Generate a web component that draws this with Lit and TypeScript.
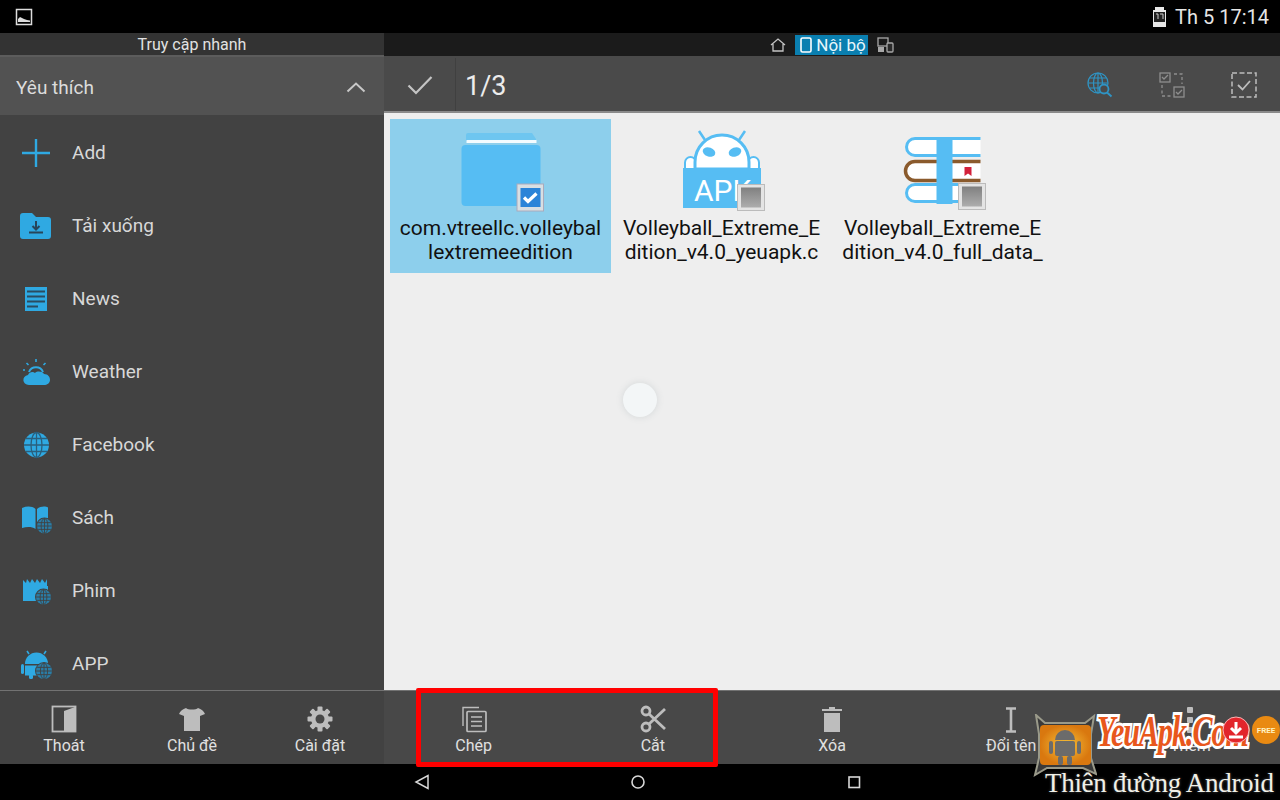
import { LitElement, html, css, svg } from "lit";
import { customElement } from "lit/decorators.js";

const BLUE = "#2fa9e2";
const GREY = "#bdbdbd";

const smallGlobe = (cx: number, cy: number, r: number) => svg`
  <circle cx=${cx} cy=${cy} r=${r + 1} fill="#424242" />
  <circle cx=${cx} cy=${cy} r=${r} fill="#2a7da6" />
  <g fill="none" stroke="#424242" stroke-width="0.9">
    <ellipse cx=${cx} cy=${cy} rx=${r * 0.45} ry=${r} />
    <path d="M${cx - r} ${cy}H${cx + r}M${cx - r * 0.85} ${cy - r * 0.45}H${cx + r * 0.85}M${cx - r * 0.85} ${cy + r * 0.45}H${cx + r * 0.85}M${cx} ${cy - r}V${cy + r}" />
  </g>`;

const menuIcons: Record<string, unknown> = {
  add: svg`<path d="M6 20H34M20 6V34" stroke=${BLUE} stroke-width="2.4" />`,
  download: svg`
    <path d="M4 10a3 3 0 0 1 3-3h9l4 4h12a3 3 0 0 1 3 3v16a3 3 0 0 1-3 3H7a3 3 0 0 1-3-3Z" fill=${BLUE} />
    <path d="M20 15v8M16.5 20l3.5 3.5 3.5-3.5M13 26.5H27" fill="none" stroke="#27465a" stroke-width="2" />`,
  news: svg`
    <rect x="9" y="8" width="22" height="24" fill=${BLUE} />
    <path d="M11 12.5H29M11 17.5H29M11 22.5H29M11 27.5H22" stroke="#2b4c60" stroke-width="2" />`,
  weather: svg`
    <path d="M13 20a7.5 7.5 0 0 1 14 0" fill="none" stroke=${BLUE} stroke-width="2" />
    <path d="M20 7v3M10.5 11l2 2M29.500 11l-2 2M7 18h2" stroke=${BLUE} stroke-width="1.6" />
    <path d="M13 33c-7 0-7.500-9-1-10 1-3 5-4 7-2 2-2 7-2 9 1 4 0 6 3 6 6s-3 5-6 5Z" fill=${BLUE} />`,
  globe: svg`
    <circle cx="20.500" cy="20" r="12.500" fill=${BLUE} />
    <g fill="none" stroke="#2b5f7c" stroke-width="1.300">
      <ellipse cx="20.500" cy="20" rx="5.500" ry="12.500" />
      <path d="M8 20H33M20.500 7.500V32.500M10 13.500H31M10 26.500H31" />
    </g>`,
  book: svg`
    <path d="M6 10c5-2 10-2 13.500 1v20C16 28.500 11 28.500 6 30Z" fill=${BLUE} />
    <path d="M21 11c3.500-3 8.500-3 11-1.500V30c-3-1.500-7.500-1.500-11 1Z" fill=${BLUE} />
    ${smallGlobe(28.500, 28, 7.500)}`,
  movie: svg`
    <path d="M7 9l3 3 1-4 3 4 2-4 3 4 2-4 3 4 2-4 3 4 2-4v7H7Z" fill=${BLUE} />
    <rect x="7" y="15" width="25" height="15" fill=${BLUE} />
    ${smallGlobe(27.500, 26, 7.500)}`,
  app: svg`
    <path d="M9 20a11.500 11.500 0 0 1 23 0Z" fill=${BLUE} />
    <path d="M13 10l-2-3M28 10l2-3" stroke=${BLUE} stroke-width="1.600" />
    <rect x="9" y="21.500" width="23" height="10" fill=${BLUE} />
    <rect x="5" y="20" width="3" height="10" rx="1.500" fill=${BLUE} />
    <rect x="13" y="30" width="4" height="5" rx="1.500" fill=${BLUE} />
    ${smallGlobe(28, 27, 8)}`,
};

const toolIcons: Record<string, unknown> = {
  exit: svg`
    <rect x="3.500" y="2.500" width="23" height="25" fill="none" stroke=${GREY} stroke-width="1.800" />
    <path d="M15 7l11-4v24H15Z" fill=${GREY} />`,
  theme: svg`<path d="M9 4c2 2 10 2 12 0 3 1 6 3 7 6l-5 2v15H7V12l-5-2c1-3 4-5 7-6Z" fill=${GREY} />`,
  gear: svg`
    <g fill=${GREY}>
      <circle cx="15" cy="15" r="9" />
      ${[0, 45, 90, 135, 180, 225, 270, 315].map(
        (a) => svg`<rect x="12.500" y="2.500" width="5" height="6" rx="1" transform="rotate(${a} 15 15)" />`
      )}
    </g>
    <circle cx="15" cy="15" r="4.500" fill="#484848" />`,
  copy: svg`
    <path d="M4 22V3.500H20" fill="none" stroke=${GREY} stroke-width="1.400" />
    <g fill="none" stroke=${GREY} stroke-width="1.700">
      <rect x="8" y="7.500" width="19" height="20" rx="1" />
      <path d="M12 13H23M12 17.500H23M12 22H23" />
    </g>`,
  cut: svg`
    <g fill="none" stroke=${GREY} stroke-width="2.800">
      <circle cx="8" cy="7" r="4" />
      <circle cx="8" cy="23" r="4" />
      <path d="M11 10L27 25M11 20L27 5" />
    </g>`,
  trash: svg`
    <path d="M5 5h7V3h6v2h7v2H5Z" fill=${GREY} />
    <rect x="7" y="9" width="16" height="19" fill=${GREY} />`,
  rename: svg`<path d="M10 4.500H20M10 27.500H20M15 4.500V27.500" fill="none" stroke=${GREY} stroke-width="2.600" />`,
  more: svg`
    <g fill=${GREY}>
      <rect x="12" y="3" width="6" height="6" rx="1" />
      <rect x="12" y="13" width="6" height="6" rx="1" />
      <rect x="12" y="23" width="6" height="6" rx="1" />
    </g>`,
};

const greyCheck = (x: number, y: number) => svg`
  <rect x=${x} y=${y} width="27" height="26" fill="#e4e4e4" stroke="#bbb" />
  <rect x=${x + 3.500} y=${y + 3} width="20" height="20" fill="url(#chk)" />`;

const fileIcons = {
  folder: svg`
    <path d="M20 22V16a2 2 0 0 1 2-2H86l4 6v4Z" fill="#6ec6f0" />
    <rect x="20.500" y="21" width="70" height="3" fill="#f2fbff" />
    <path d="M15.500 30a4 4 0 0 1 4-4H90.500a4 4 0 0 1 4 4V83a4 4 0 0 1-4 4H19.500a4 4 0 0 1-4-4Z" fill="#56bdf3" />
    <rect x="71" y="65" width="26.500" height="27" fill="#d8dfe3" stroke="#aab" />
    <rect x="74.500" y="69" width="20" height="19" fill="#2b84d8" />
    <path d="M78 78.500l4 4 8.500-8" fill="none" stroke="#fff" stroke-width="3.200" />`,
  apk: svg`
    <rect x="18" y="38" width="11" height="16" rx="5.500" fill="#fff" stroke="#56bdf3" stroke-width="2" />
    <rect x="81" y="38" width="11" height="16" rx="5.500" fill="#fff" stroke="#56bdf3" stroke-width="2" />
    <path d="M38 21l-6-9M72 21l6-9" stroke="#56bdf3" stroke-width="2.500" />
    <path d="M28 50V43a27 27 0 0 1 54 0V50Z" fill="#fff" stroke="#56bdf3" stroke-width="3" />
    <ellipse cx="42" cy="33" rx="6.500" ry="4.500" fill="#56bdf3" transform="rotate(20 42 33)" />
    <ellipse cx="68" cy="33" rx="6.500" ry="4.500" fill="#56bdf3" transform="rotate(-20 68 33)" />
    <rect x="16" y="49" width="78" height="40" fill="#56bdf3" />
    <text x="27" y="82" font-family="Roboto, sans-serif" font-size="30" fill="#fff">APK</text>
    ${greyCheck(70.500, 65.500)}`,
  books: svg`
    <path d="M92.500 19.500H27a8.500 8.500 0 0 0 0 17H92.500" fill="#fff" stroke="#56bdf3" stroke-width="3" />
    <path d="M92.500 42.500H27a9 9 0 0 0 0 19H92.500" fill="#fff" stroke="#8a5a2c" stroke-width="3.500" />
    <path d="M92.500 65.500H27a8.500 8.500 0 0 0 0 17H92.500" fill="#fff" stroke="#56bdf3" stroke-width="3" />
    <rect x="48.500" y="18" width="16" height="67" fill="#56bdf3" />
    <path d="M76.500 48h7v9l-3.500-2.500-3.500 2.500Z" fill="#d3203a" />
    ${greyCheck(70.500, 64.500)}`,
};

const MENU = [
  ["add", "Add"],
  ["download", "Tải xuống"],
  ["news", "News"],
  ["weather", "Weather"],
  ["globe", "Facebook"],
  ["book", "Sách"],
  ["movie", "Phim"],
  ["app", "APP"],
];

const FILES = [
  { icon: fileIcons.folder, lines: ["com.vtreellc.volleybal", "lextremeedition"], selected: true },
  { icon: fileIcons.apk, lines: ["Volleyball_Extreme_E", "dition_v4.0_yeuapk.c"], selected: false },
  { icon: fileIcons.books, lines: ["Volleyball_Extreme_E", "dition_v4.0_full_data_"], selected: false },
];

@customElement("app-root")
export class AppRoot extends LitElement {
  tool(icon: string, label: string) {
    return html`
      <div class="tool">
        <svg width="30" height="30" viewBox="0 0 30 30">${toolIcons[icon]}</svg>
        <span>${label}</span>
      </div>
    `;
  }

  renderLogo() {
    return html`
      <svg class="logo-badge" width="64" height="64" viewBox="0 0 64 64">
        <defs>
          <radialGradient id="glow">
            <stop offset="0" stop-color="#f6c23a" />
            <stop offset="1" stop-color="#d9780f" />
          </radialGradient>
        </defs>
        <path d="M3 1l9 8H52L61 2 58 20V44L63 60 50 54H14L2 61 6 44V20Z" fill="#3a3a3a" stroke="#9a9a8a" stroke-width="2" />
        <rect x="7" y="11" width="51" height="40" rx="4" fill="url(#glow)" />
        <g fill="#6b6b6b">
          <path d="M22 26a10 10 0 0 1 20 0Z" />
          <rect x="22" y="27" width="20" height="15" rx="2" />
          <rect x="16" y="27" width="4" height="13" rx="2" />
          <rect x="44" y="27" width="4" height="13" rx="2" />
          <rect x="25" y="42" width="5" height="9" rx="2" />
          <rect x="34" y="42" width="5" height="9" rx="2" />
        </g>
      </svg>
      <span class="logo-name">YeuApk.Com</span>
      <svg class="logo-free" width="62" height="32" viewBox="0 0 62 32">
        <circle cx="15" cy="16" r="13" fill="#e2252b" stroke="#f7b5b5" />
        <path d="M15 8v10M10 14l5 5 5-5M8 23H22" fill="none" stroke="#fff" stroke-width="3" />
        <circle cx="45" cy="16" r="14" fill="#e98a12" />
        <text x="45" y="19" text-anchor="middle" font-family="Roboto, sans-serif" font-size="8" font-weight="700" fill="#fff2c0">FREE</text>
      </svg>
      <span class="logo-tag">Thiên đường Android</span>
    `;
  }

  render() {
    return html`
      <header class="status">
        <svg width="18" height="18" viewBox="0 0 18 18">
          <rect x="1.500" y="1.500" width="15" height="15" fill="none" stroke="#ddd" stroke-width="1.500" />
          <path d="M3 14v-3l2-2 2 1 2 1 3 1 3 .5V14Z" fill="#ddd" />
        </svg>
        <div class="status-right">
          <svg width="15" height="20" viewBox="0 0 15 20">
            <path d="M3 0H12V3H14V20H1V3H3Z" fill="#e8e8e8" />
            <rect x="2" y="5" width="11" height="10" fill="#222" />
            <path d="M4 7h2v5M8 7h3v5" fill="none" stroke="#ccc" stroke-width="1" />
          </svg>
          <span>Th 5 17:14</span>
        </div>
      </header>

      <div class="main">
        <aside class="side">
          <div class="side-title">Truy cập nhanh</div>
          <div class="side-head">
            <span>Yêu thích</span>
            <svg width="20" height="12" viewBox="0 0 20 12">
              <path d="M1.500 10.500L10 2.500l8.500 8" fill="none" stroke="#c8c8c8" stroke-width="2" />
            </svg>
          </div>
          <div class="menu">
            ${MENU.map(
              ([icon, label]) => html`
                <div class="row">
                  <svg width="40" height="40" viewBox="0 0 40 40">${menuIcons[icon]}</svg>
                  <span>${label}</span>
                </div>
              `
            )}
          </div>
          <div class="tools">
            ${this.tool("exit", "Thoát")}
            ${this.tool("theme", "Chủ đề")}
            ${this.tool("gear", "Cài đặt")}
          </div>
        </aside>

        <section class="pane">
          <div class="crumbs">
            <svg width="16" height="14" viewBox="0 0 16 14">
              <path d="M1 7L8 1l7 6M3 6v7H13V6" fill="none" stroke="#c4c4c4" stroke-width="1.300" />
            </svg>
            <div class="chip">
              <svg width="12" height="16" viewBox="0 0 12 16">
                <rect x="1" y="1" width="10" height="14" rx="1.500" fill="none" stroke="#fff" stroke-width="1.600" />
              </svg>
              Nội bộ
            </div>
            <svg width="17" height="16" viewBox="0 0 17 16">
              <rect x="1" y="1" width="10" height="8" fill="none" stroke="#a8a8a8" stroke-width="1.300" />
              <rect x="1" y="10" width="6" height="5" fill="#a8a8a8" />
              <rect x="10" y="6" width="6" height="9" rx="1" fill="#2a2a2a" stroke="#a8a8a8" stroke-width="1.300" />
            </svg>
          </div>

          <div class="bar">
            <div class="bar-check">
              <svg width="26" height="20" viewBox="0 0 26 20">
                <path d="M1.500 10.500l7.500 7.500L24.500 2" fill="none" stroke="#c4c4c4" stroke-width="2.200" />
              </svg>
            </div>
            <div class="count">1/3</div>
            <div class="bar-icons">
              <svg width="26" height="26" viewBox="0 0 26 26">
                <g fill="none" stroke="#2f94c4" stroke-width="1.200">
                  <circle cx="11" cy="11" r="10" />
                  <ellipse cx="11" cy="11" rx="4.500" ry="10" />
                  <path d="M1 11H21M11 1V21M2.500 6H19.500M2.500 16H13" />
                </g>
                <circle cx="17" cy="17" r="4.500" fill="#4a4a4a" stroke="#2f94c4" stroke-width="1.800" />
                <path d="M20 20.500l4.500 4" stroke="#2f94c4" stroke-width="2" />
              </svg>
              <svg width="26" height="26" viewBox="0 0 26 26">
                <g fill="none" stroke="#8e8e8e" stroke-width="1.300">
                  <rect x="1" y="1" width="10" height="9" />
                  <rect x="15" y="15" width="10" height="10" />
                  <path d="M3 5l2 2 4-4M17 20l2 2 4-4" />
                  <path d="M15 2h8v10M3 13v11h9" stroke-dasharray="3 2.500" />
                </g>
              </svg>
              <svg width="26" height="26" viewBox="0 0 26 26">
                <rect x="1" y="1" width="24" height="24" fill="none" stroke="#bdbdbd" stroke-width="1.500" stroke-dasharray="5 2.500" />
                <path d="M7 13l4.500 4.500L19 9" fill="none" stroke="#bdbdbd" stroke-width="1.800" />
              </svg>
            </div>
          </div>

          <div class="files">
            ${FILES.map(
              (f) => html`
                <div class="file ${f.selected ? "selected" : ""}">
                  <svg width="110" height="97" viewBox="0 0 110 97">
                    <defs>
                      <linearGradient id="chk" x1="0" y1="0" x2="0" y2="1">
                        <stop offset="0" stop-color="#808080" />
                        <stop offset="1" stop-color="#adadad" />
                      </linearGradient>
                    </defs>
                    ${f.icon}
                  </svg>
                  ${f.lines.map((l) => html`<span>${l}</span>`)}
                </div>
              `
            )}
            <div class="spinner"></div>
          </div>

          <div class="tools">
            ${this.tool("copy", "Chép")}
            ${this.tool("cut", "Cắt")}
            ${this.tool("trash", "Xóa")}
            ${this.tool("rename", "Đổi tên")}
            ${this.tool("more", "Thêm")}
          </div>
        </section>
      </div>

      <nav class="nav">
        <svg width="20" height="20" viewBox="0 0 20 20">
          <path d="M16 3.500V16.500L4 10Z" fill="none" stroke="#d8d8d8" stroke-width="1.500" />
        </svg>
        <svg width="20" height="20" viewBox="0 0 20 20">
          <circle cx="10" cy="10" r="6" fill="none" stroke="#d8d8d8" stroke-width="1.600" />
        </svg>
        <svg width="20" height="20" viewBox="0 0 20 20">
          <rect x="5" y="5" width="10.500" height="10.500" fill="none" stroke="#d8d8d8" stroke-width="1.600" />
        </svg>
      </nav>

      <div class="highlight"></div>
      ${this.renderLogo()}
    `;
  }

  static styles = css`
    :host {
      display: block;
      position: relative;
      width: 1280px;
      height: 800px;
      overflow: hidden;
      background: #000;
      font-family: Roboto, "Liberation Sans", sans-serif;
    }

    svg {
      display: block;
      flex: none;
    }

    .status {
      height: 33px;
      display: flex;
      align-items: center;
      justify-content: space-between;
      padding: 0 11px 0 15px;
    }

    .status-right {
      display: flex;
      align-items: center;
      gap: 8px;
      color: #e6e6e6;
      font-size: 20px;
    }

    .main {
      display: flex;
      height: 731px;
    }

    .side {
      width: 384px;
      display: flex;
      flex-direction: column;
      background: #424242;
    }

    .side-title {
      height: 24px;
      line-height: 23px;
      text-align: center;
      font-size: 16px;
      color: #e2e2e2;
      background: #333;
      box-sizing: border-box;
      border-bottom: 2px solid #5c5c5c;
    }

    .side-head {
      height: 58px;
      flex: none;
      box-sizing: border-box;
      display: flex;
      align-items: center;
      justify-content: space-between;
      padding: 2px 18px 0 16px;
      background: #525252;
      font-size: 19px;
      color: #dcdcdc;
    }

    .menu {
      flex: 1;
      overflow: hidden;
      min-height: 0;
      padding-top: 1px;
    }

    .row {
      height: 73px;
      display: flex;
      align-items: center;
      gap: 16px;
      padding-left: 16px;
      font-size: 19px;
      color: #d8d8d8;
    }

    .tools {
      height: 74px;
      flex: none;
      box-sizing: border-box;
      display: flex;
      background: #484848;
      border-top: 1px solid #727272;
    }

    .side .tools {
      background: #424242;
    }

    .tool {
      flex: 1;
      display: flex;
      flex-direction: column;
      align-items: center;
      gap: 3px;
      padding-top: 13px;
      font-size: 16px;
      line-height: 18px;
      color: #e0e0e0;
    }

    .pane {
      flex: 1;
      display: flex;
      flex-direction: column;
      min-width: 0;
    }

    .crumbs {
      height: 23px;
      flex: none;
      display: flex;
      align-items: center;
      justify-content: center;
      gap: 9px;
      background: #1b1b1b;
    }

    .chip {
      display: flex;
      align-items: center;
      gap: 4px;
      height: 20px;
      padding: 0 2px 0 5px;
      background: #0a7fb0;
      color: #e8f6fb;
      font-size: 17px;
    }

    .bar {
      height: 57px;
      flex: none;
      box-sizing: border-box;
      display: flex;
      align-items: center;
      padding-top: 2px;
      background: #4a4a4a;
      border-bottom: 2px solid #8a8a8a;
    }

    .bar-check {
      width: 72px;
      height: 100%;
      box-sizing: border-box;
      display: flex;
      align-items: center;
      justify-content: center;
      border-right: 1px solid #404040;
    }

    .count {
      margin-left: 9px;
      padding-top: 2px;
      font-size: 27px;
      color: #ececec;
    }

    .bar-icons {
      margin-left: auto;
      margin-right: 23px;
      display: flex;
      gap: 46px;
    }

    .files {
      flex: 1;
      position: relative;
      display: flex;
      align-items: flex-start;
      padding: 6px 0 0 6px;
      background: #eeeeee;
    }

    .file {
      width: 221px;
      height: 154px;
      display: flex;
      flex-direction: column;
      align-items: center;
      font-size: 21px;
      line-height: 24px;
      color: #111;
      white-space: nowrap;
    }

    .file.selected {
      background: #8dcfec;
    }

    .spinner {
      position: absolute;
      left: 239px;
      top: 270px;
      width: 34px;
      height: 34px;
      border-radius: 50%;
      background: #f3f6f7;
      box-shadow: 0 0 6px 1px #d9dcdd;
    }

    .nav {
      height: 36px;
      display: flex;
      align-items: center;
      justify-content: center;
      gap: 196px;
      padding-right: 4px;
    }

    .highlight {
      position: absolute;
      left: 416px;
      top: 688px;
      width: 302px;
      height: 79px;
      box-sizing: border-box;
      border: 5px solid #f00;
      border-radius: 2px;
    }

    .logo-badge {
      position: absolute;
      left: 1033px;
      top: 714px;
    }

    .logo-name {
      position: absolute;
      left: 1097px;
      top: 722px;
      font-family: "Liberation Serif", serif;
      font-style: italic;
      font-weight: 700;
      font-size: 30px;
      letter-spacing: -1px;
      line-height: 36px;
      color: #e8571c;
      -webkit-text-stroke: 4px #fff;
      paint-order: stroke fill;
      white-space: nowrap;
      transform: scaleY(1.5);
      transform-origin: 0 100%;
    }

    .logo-free {
      position: absolute;
      left: 1221px;
      top: 714px;
    }

    .logo-tag {
      position: absolute;
      left: 1045px;
      top: 766px;
      font-family: "Liberation Serif", serif;
      font-size: 27px;
      line-height: 34px;
      letter-spacing: -0.3px;
      color: #f0f0e8;
      text-shadow: 0 0 3px #555;
      white-space: nowrap;
    }
  `;
}
